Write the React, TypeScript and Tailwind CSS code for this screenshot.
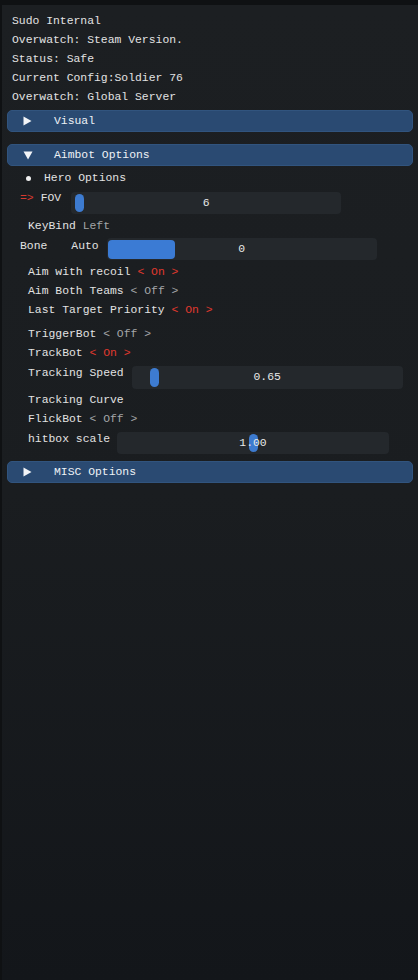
import React from "react";

const font = { fontFamily: '"Liberation Mono", "DejaVu Sans Mono", monospace' };

function Header({ label, open }: { label: string; open?: boolean }) {
  return (
    <div className="ml-[7px] mr-[5px] h-[22px] rounded-[5px] bg-[#2a4a72] border border-[#31547e] flex items-center text-[#eef2f6]">
      <div className="w-[17px] ml-[15px] flex items-center">
        {open ? (
          <svg width="10" height="9" viewBox="0 0 10 9">
            <path d="M0.5 0.5 L9.5 0.5 L5 8.5 Z" fill="#f2f4f7" />
          </svg>
        ) : (
          <svg width="9" height="10" viewBox="0 0 9 10">
            <path d="M0.5 0.5 L8.5 5 L0.5 9.5 Z" fill="#f2f4f7" />
          </svg>
        )}
      </div>
      <span className="ml-[14px] leading-[14px]">{label}</span>
    </div>
  );
}

function Slider({
  left,
  width,
  height,
  grabLeft,
  fill,
  value,
}: {
  left: number;
  width: number;
  height: number;
  grabLeft?: number;
  fill?: number;
  value: string;
}) {
  return (
    <div
      className="relative rounded-[4px] bg-[#24282c] flex items-center justify-center text-[#e8e8e8]"
      style={{ marginLeft: left, width, height }}
    >
      {grabLeft !== undefined && (
        <div
          className="absolute top-[2px] w-[9px] rounded-full bg-[#3d7bd0]"
          style={{ left: grabLeft, height: height - 4 }}
        />
      )}
      {fill !== undefined && (
        <div
          className="absolute top-[2px] left-[1px] rounded-[4px] bg-[#3b7bd4]"
          style={{ width: fill, height: height - 3 }}
        />
      )}
      <span className="relative leading-[14px]">{value}</span>
    </div>
  );
}

const Red = ({ children }: { children: React.ReactNode }) => (
  <span className="text-[#e0392e]">{children}</span>
);
const Grey = ({ children }: { children: React.ReactNode }) => (
  <span className="text-[#a3a5a8]">{children}</span>
);

export default function App() {
  return (
    <div
      className="w-[418px] h-[980px] overflow-hidden border-t-[5px] border-l-[2px] border-[#0f1113] bg-gradient-to-b from-[#1c1f22] via-[#1a1d20] to-[#13161a] text-[11.4px] text-[#e2e2e2] whitespace-pre"
      style={font}
    >
      <div className="pt-[7px] pl-[10px] leading-[19px]">
        <div>Sudo Internal</div>
        <div>Overwatch: Steam Version.</div>
        <div>Status: Safe</div>
        <div>Current Config:Soldier 76</div>
        <div>Overwatch: Global Server</div>
      </div>

      <div className="-ml-[2px]">
        <div className="mt-[3px]">
          <Header label="Visual" />
        </div>
        <div className="mt-[12px]">
          <Header label="Aimbot Options" open />
        </div>

        {/* Hero Options */}
        <div className="mt-[2.5px] h-[19px] flex items-center leading-[19px]">
          <div className="ml-[26px] w-[5px] h-[5px] rounded-full bg-[#f0f0f0]" />
          <span className="ml-[13px]">Hero Options</span>
        </div>

        {/* FOV */}
        <div className="mt-[3px] h-[24px] flex items-start">
          <span className="ml-[20px] leading-[14px] text-[#d83a30]">=&gt;</span>
          <span className="ml-[7px] leading-[14px]">FOV</span>
          <div className="mt-[1px]">
            <Slider left={10} width={270} height={22} grabLeft={4} value="6" />
          </div>
        </div>

        {/* KeyBind */}
        <div className="mt-[2.5px] h-[19px] leading-[19px] pl-[28px]">
          KeyBind <Grey>Left</Grey>
        </div>

        {/* Bone Auto */}
        <div className="mt-[0.5px] h-[24px] flex items-start">
          <span className="ml-[20px] mt-[2px] leading-[14px]">Bone</span>
          <span className="ml-[24px] mt-[2px] leading-[14px]">Auto</span>
          <div className="mt-[1px]">
            <Slider left={8} width={270} height={22} fill={67} value="0" />
          </div>
        </div>

        <div className="mt-[2.5px] pl-[28px] leading-[19px]">
          <div>
            Aim with recoil <Red>&lt; On &gt;</Red>
          </div>
          <div>
            Aim Both Teams <Grey>&lt; Off &gt;</Grey>
          </div>
          <div>
            Last Target Priority <Red>&lt; On &gt;</Red>
          </div>
        </div>

        <div className="mt-[5px] pl-[28px] leading-[19px]">
          <div>
            TriggerBot <Grey>&lt; Off &gt;</Grey>
          </div>
          <div>
            TrackBot <Red>&lt; On &gt;</Red>
          </div>
        </div>

        {/* Tracking Speed */}
        <div className="mt-[1.5px] h-[25px] flex items-start">
          <span className="ml-[28px] mt-[1px] leading-[14px]">Tracking Speed</span>
          <div className="mt-[1px]">
            <Slider left={8} width={271} height={23} grabLeft={18} value="0.65" />
          </div>
        </div>

        <div className="mt-[1.5px] pl-[28px] leading-[19px]">
          <div>Tracking Curve</div>
          <div>
            FlickBot <Grey>&lt; Off &gt;</Grey>
          </div>
        </div>

        {/* hitbox scale */}
        <div className="mt-[1.5px] h-[24px] flex items-start">
          <span className="ml-[28px] mt-[1px] leading-[14px]">hitbox scale</span>
          <div className="mt-[1px]">
            <Slider left={7} width={272} height={22} grabLeft={132} value="1.00" />
          </div>
        </div>

        <div className="mt-[6px]">
          <Header label="MISC Options" />
        </div>
      </div>
    </div>
  );
}
